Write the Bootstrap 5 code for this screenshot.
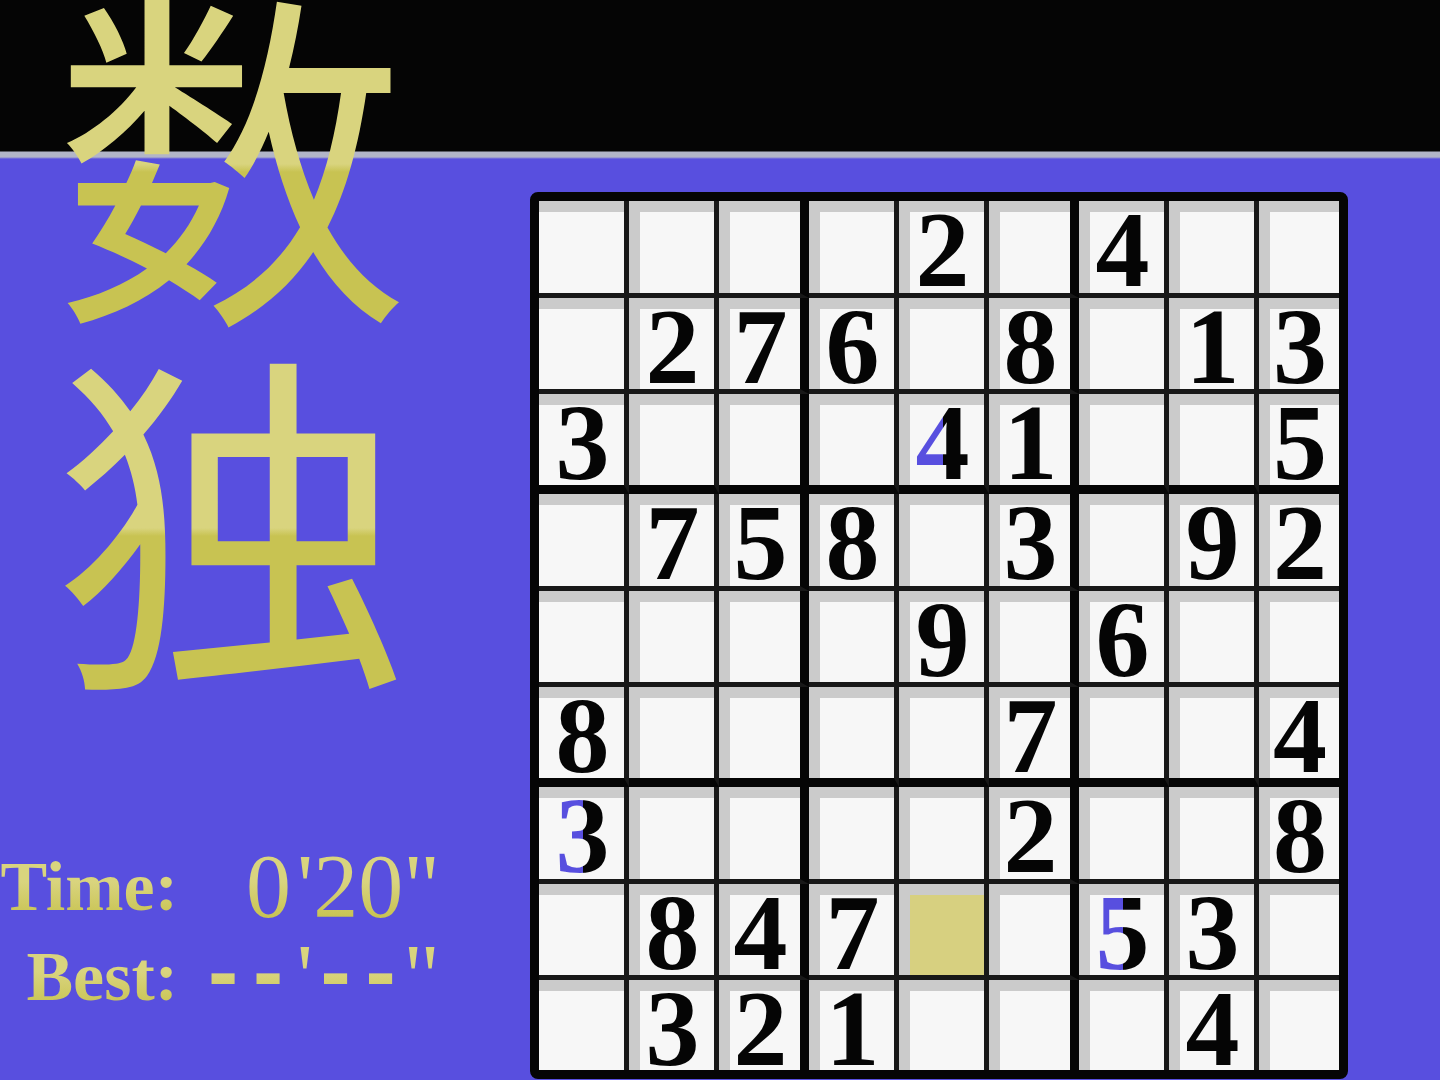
<!DOCTYPE html>
<html lang="en">
<head>
<meta charset="utf-8">
<meta name="viewport" content="width=device-width, initial-scale=1">
<title>数独</title>
<link rel="stylesheet" href="https://cdn.jsdelivr.net/npm/bootstrap@5.3.0/dist/css/bootstrap.min.css">
<style>
  :root { --blue: #584fdf; --sand: #d9d47e; --olive: #c8c352; }
  body {
    background: linear-gradient(#050505 151px, #b2b5c8 152px, #b2b5c8 157px, var(--blue) 159px) no-repeat var(--blue);
    font-family: "Liberation Serif", serif;
    overflow: hidden;
  }
  .side { width: 530px; }
  .game-title {
    font: 400 356px/330px "Noto Sans CJK SC", sans-serif;
    margin: -22px 0 0 53px;
  }
  .game-title span {
    background: linear-gradient(var(--sand) 186px, var(--olive) 194px);
    -webkit-background-clip: text; background-clip: text;
    color: transparent;
    width: 370px;
    padding-bottom: 34px;
  }
  .stats { margin-top: 136px; width: 440px; }
  .stat-line { height: 90px; line-height: 90px; }
  .stat-line dt { width: 178px; font-size: 70px; font-weight: 700; }
  .stat-line dd { font-size: 90px; }
  .minutes { margin-right: 6px; }
  .dashes { font: 700 75px/84px "DejaVu Sans Mono", monospace; }
  .gold {
    background: linear-gradient(var(--sand) 40px, var(--olive) 75px);
    -webkit-background-clip: text; background-clip: text;
    color: transparent;
  }
  .board-wrap { padding-top: 192px; }
  .board {
    width: 818px; table-layout: fixed;
    border: 9px solid #050505; border-radius: 8px;
    border-collapse: separate; border-spacing: 0;
    background: #050505; color: #050505;
  }
  .board col { width: 90px; }
  .board col:last-child { width: 80px; }
  .board td {
    height: 96px; padding: 8px 0 0 2px;
    border: solid #181818; border-width: 0 5px 5px 0;
    background: #f7f7f7;
    box-shadow: inset 11px 11px #cbcbcb;
    font-size: 108px; font-weight: 700; line-height: 82px;
    text-align: center; vertical-align: top;
  }
  .board tr:nth-child(3n+1) td { height: 97px; }
  .board td:first-child { box-shadow: inset 0 11px #cbcbcb; }
  .board td:nth-child(3n) { border-right: 9px solid #050505; }
  .board tr:nth-child(3n) td { height: 100px; border-bottom: 9px solid #050505; }
  .board td:last-child { border-right: 0; }
  .board tr:last-child td { height: 90px; border-bottom: 0; }
  .board td.cursor { background: #d7d080; }
  .hint {
    display: block; height: 82px;
    background: linear-gradient(90deg, var(--blue) 50%, #050505 50%);
    -webkit-background-clip: text; background-clip: text;
    color: transparent;
  }
</style>
<script src="https://cdn.jsdelivr.net/npm/bootstrap@5.3.0/dist/js/bootstrap.bundle.min.js"></script>
</head>
<body>
<main class="d-flex align-items-start">
  <section class="side flex-shrink-0">
    <h1 class="game-title" lang="zh"><span class="d-block">数</span><span class="d-block">独</span></h1>
    <dl class="stats mb-0">
      <div class="stat-line d-flex justify-content-between">
        <dt class="text-end"><span class="gold d-block">Time:</span></dt>
        <dd class="mb-0"><span class="gold d-block"><span class="minutes">0</span>'20"</span></dd>
      </div>
      <div class="stat-line d-flex justify-content-between">
        <dt class="text-end"><span class="gold d-block">Best:</span></dt>
        <dd class="mb-0 d-flex gold"><span class="dashes minutes">--</span>'<span class="dashes">--</span>"</dd>
      </div>
    </dl>
  </section>
  <section class="board-wrap">
    <table class="board">
      <colgroup><col><col><col><col><col><col><col><col><col></colgroup>
      <tbody>
        <tr><td></td><td></td><td></td><td></td><td>2</td><td></td><td>4</td><td></td><td></td></tr>
        <tr><td></td><td>2</td><td>7</td><td>6</td><td></td><td>8</td><td></td><td>1</td><td>3</td></tr>
        <tr><td>3</td><td></td><td></td><td></td><td><span class="hint">4</span></td><td>1</td><td></td><td></td><td>5</td></tr>
        <tr><td></td><td>7</td><td>5</td><td>8</td><td></td><td>3</td><td></td><td>9</td><td>2</td></tr>
        <tr><td></td><td></td><td></td><td></td><td>9</td><td></td><td>6</td><td></td><td></td></tr>
        <tr><td>8</td><td></td><td></td><td></td><td></td><td>7</td><td></td><td></td><td>4</td></tr>
        <tr><td><span class="hint">3</span></td><td></td><td></td><td></td><td></td><td>2</td><td></td><td></td><td>8</td></tr>
        <tr><td></td><td>8</td><td>4</td><td>7</td><td class="cursor"></td><td></td><td><span class="hint">5</span></td><td>3</td><td></td></tr>
        <tr><td></td><td>3</td><td>2</td><td>1</td><td></td><td></td><td></td><td>4</td><td></td></tr>
      </tbody>
    </table>
  </section>
</main>
</body>
</html>
